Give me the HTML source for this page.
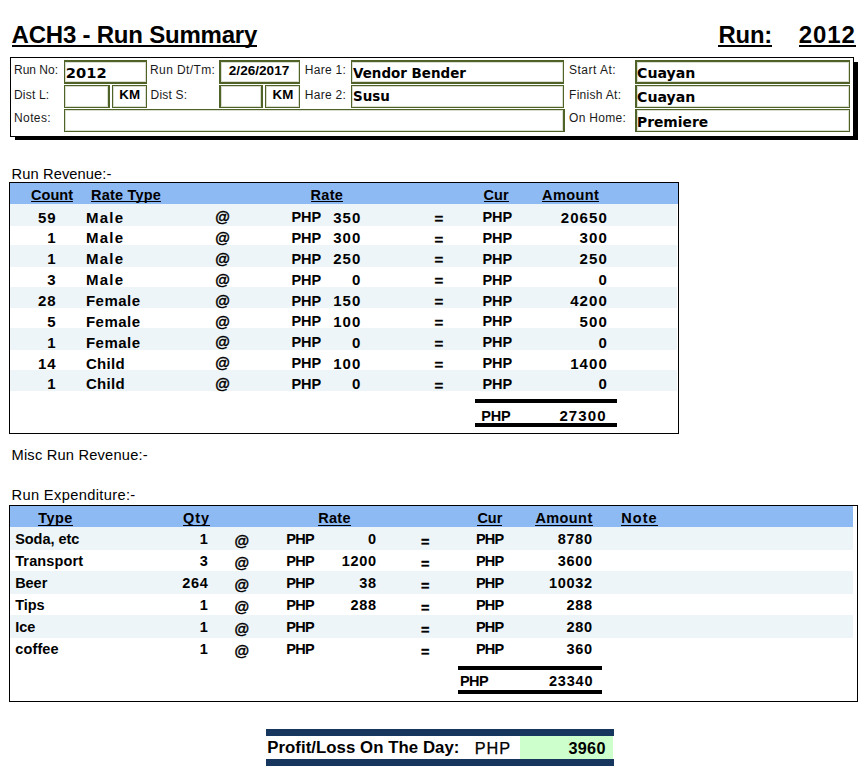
<!DOCTYPE html>
<html lang="en">
<head>
<meta charset="utf-8">
<title>ACH3 - Run Summary</title>
<style>
html,body{margin:0;padding:0;background:#fff}
body{width:864px;height:773px;position:relative;overflow:hidden;font-family:'Liberation Sans',sans-serif;color:#000}
.t{position:absolute;white-space:nowrap;font-family:'Liberation Sans',sans-serif;font-weight:400}
.b{font-weight:700}
.lab{color:#1a1a1a}
.r{position:absolute}
.fb{position:absolute;box-sizing:border-box;border:0 solid #4f6228;background:#fff;box-shadow:inset 0 0 0 1px rgba(79,98,40,.22)}
.shd{position:absolute;left:15px;top:62px;width:843px;height:78px;background:#000}
.hdr{position:absolute;left:10px;top:57px;width:844px;height:80px;box-sizing:border-box;border:1px solid #000;background:#fff}
</style>
</head>
<body>
<div class="t b" style="top:19.88px;font-size:24px;line-height:29px;height:25.12px;left:11.60px;letter-spacing:-0.22px;border-bottom:2px solid #000">ACH3 - Run Summary</div>
<div class="t b" style="top:19.95px;font-size:23.8px;line-height:29px;height:25.05px;left:718.40px;letter-spacing:-0.1px;border-bottom:2px solid #000">Run:</div>
<div class="t b" style="top:19.88px;font-size:24px;line-height:29px;height:25.12px;left:798.80px;letter-spacing:0.9px;border-bottom:2px solid #000">2012</div>
<div class="shd"></div>
<div class="hdr"></div>
<div class="fb" style="left:64px;top:60px;width:83px;height:24px;border-width:2px 1px 2px 1px"></div>
<div class="fb" style="left:219px;top:60px;width:81px;height:24px;border-width:2px 1px 2px 2px"></div>
<div class="fb" style="left:351px;top:60px;width:213px;height:24px;border-width:2px 1px 2px 1px"></div>
<div class="fb" style="left:635px;top:60px;width:215px;height:24px;border-width:2px 1px 2px 2px"></div>
<div class="fb" style="left:64px;top:85px;width:46px;height:23px;border-width:1px 2px 1px 1px"></div>
<div class="fb" style="left:112px;top:85px;width:35px;height:23px;border-width:1px 1px 1px 1px"></div>
<div class="fb" style="left:219px;top:85px;width:44px;height:23px;border-width:1px 2px 1px 2px"></div>
<div class="fb" style="left:265px;top:85px;width:35px;height:23px;border-width:1px 1px 1px 1px"></div>
<div class="fb" style="left:351px;top:85px;width:213px;height:23px;border-width:1px 1px 1px 1px"></div>
<div class="fb" style="left:635px;top:85px;width:215px;height:23px;border-width:1px 1px 1px 2px"></div>
<div class="fb" style="left:64px;top:109px;width:501px;height:23px;border-width:1px 2px 1px 1px"></div>
<div class="fb" style="left:635px;top:109px;width:215px;height:23px;border-width:1px 1px 1px 2px"></div>
<div class="t lab" style="top:63.34px;font-size:12px;line-height:14px;height:14px;left:14.00px">Run No:</div>
<div class="t lab" style="top:87.59px;font-size:12px;line-height:14px;height:14px;left:14.00px;letter-spacing:0.2px">Dist L:</div>
<div class="t lab" style="top:111.34px;font-size:12px;line-height:14px;height:14px;left:14.00px;letter-spacing:0.4px">Notes:</div>
<div class="t lab" style="top:63.34px;font-size:12px;line-height:14px;height:14px;left:150.00px;letter-spacing:0.4px">Run Dt/Tm:</div>
<div class="t lab" style="top:87.59px;font-size:12px;line-height:14px;height:14px;left:150.60px;letter-spacing:0.2px">Dist S:</div>
<div class="t lab" style="top:63.34px;font-size:12px;line-height:14px;height:14px;left:304.70px;letter-spacing:0.3px">Hare 1:</div>
<div class="t lab" style="top:87.59px;font-size:12px;line-height:14px;height:14px;left:304.70px;letter-spacing:0.3px">Hare 2:</div>
<div class="t lab" style="top:63.34px;font-size:12px;line-height:14px;height:14px;left:569.00px;letter-spacing:0.5px">Start At:</div>
<div class="t lab" style="top:87.59px;font-size:12px;line-height:14px;height:14px;left:569.00px;letter-spacing:0.3px">Finish At:</div>
<div class="t lab" style="top:111.34px;font-size:12px;line-height:14px;height:14px;left:569.00px;letter-spacing:0.3px">On Home:</div>
<div class="t b" style="top:63.82px;font-size:14.67px;line-height:18px;height:18px;left:65.80px;font-family:'DejaVu Sans', sans-serif;transform:scaleX(1.0);transform-origin:left center">2012</div>
<div class="t b" style="top:63.92px;font-size:14.67px;line-height:18px;height:18px;left:352.50px;font-family:'DejaVu Sans', sans-serif;transform:scaleX(0.918);transform-origin:left center">Vendor Bender</div>
<div class="t b" style="top:87.42px;font-size:14.67px;line-height:18px;height:18px;left:352.50px;font-family:'DejaVu Sans', sans-serif;transform:scaleX(0.918);transform-origin:left center">Susu</div>
<div class="t b" style="top:63.92px;font-size:14.67px;line-height:18px;height:18px;left:636.70px;font-family:'DejaVu Sans', sans-serif;transform:scaleX(0.965);transform-origin:left center">Cuayan</div>
<div class="t b" style="top:87.67px;font-size:14.67px;line-height:18px;height:18px;left:636.70px;font-family:'DejaVu Sans', sans-serif;transform:scaleX(0.965);transform-origin:left center">Cuayan</div>
<div class="t b" style="top:112.52px;font-size:14.67px;line-height:18px;height:18px;left:636.70px;font-family:'DejaVu Sans', sans-serif;transform:scaleX(0.945);transform-origin:left center">Premiere</div>
<div class="t b" style="top:63.04px;font-size:13.6px;line-height:16px;height:16px;left:228.80px">2/26/2017</div>
<div class="t b" style="top:86.88px;font-size:13.33px;line-height:16px;height:16px;left:119.30px">KM</div>
<div class="t b" style="top:86.88px;font-size:13.33px;line-height:16px;height:16px;left:272.50px">KM</div>
<div class="t" style="top:164.92px;font-size:14.67px;line-height:18px;height:18px;left:11.60px;letter-spacing:0.1px">Run Revenue:-</div>
<div class="t" style="top:445.92px;font-size:14.67px;line-height:18px;height:18px;left:11.50px;letter-spacing:0.2px">Misc Run Revenue:-</div>
<div class="t" style="top:485.92px;font-size:14.67px;line-height:18px;height:18px;left:11.50px;letter-spacing:0.35px">Run Expenditure:-</div>
<div class="r" style="left:9px;top:182px;width:670px;height:252px;box-sizing:border-box;border:1px solid #000"></div>
<div class="r" style="left:10px;top:183px;width:668px;height:21px;background:#8ebaf4"></div>
<div class="r" style="left:10px;top:204.0px;width:667px;height:21.6px;background:#edf5f9"></div>
<div class="r" style="left:10px;top:245.42px;width:667px;height:21.6px;background:#edf5f9"></div>
<div class="r" style="left:10px;top:286.84px;width:667px;height:21.6px;background:#edf5f9"></div>
<div class="r" style="left:10px;top:328.26px;width:667px;height:21.6px;background:#edf5f9"></div>
<div class="r" style="left:10px;top:369.68px;width:667px;height:21.6px;background:#edf5f9"></div>
<div class="t b" style="top:187.08px;font-size:14.5px;line-height:17px;height:13.92px;left:31.00px;letter-spacing:0.03px;border-bottom:1px solid #000">Count</div>
<div class="t b" style="top:187.08px;font-size:14.5px;line-height:17px;height:13.92px;left:91.00px;letter-spacing:0.2px;border-bottom:1px solid #000">Rate Type</div>
<div class="t b" style="top:187.08px;font-size:14.5px;line-height:17px;height:13.92px;left:310.60px;letter-spacing:0.27px;border-bottom:1px solid #000">Rate</div>
<div class="t b" style="top:187.08px;font-size:14.5px;line-height:17px;height:13.92px;left:483.60px;border-bottom:1px solid #000">Cur</div>
<div class="t b" style="top:187.08px;font-size:14.5px;line-height:17px;height:13.92px;left:542.00px;letter-spacing:0.41px;border-bottom:1px solid #000">Amount</div>
<div class="t b" style="top:208.50px;font-size:15px;line-height:18px;height:18px;right:807.20px;letter-spacing:1.1px">59</div>
<div class="t b" style="top:208.50px;font-size:15px;line-height:18px;height:18px;left:85.90px;letter-spacing:1.25px">Male</div>
<div class="t b" style="top:208.30px;font-size:15px;line-height:18px;height:18px;left:215.00px;font-style:italic;-webkit-text-stroke:0.35px #000">@</div>
<div class="t b" style="top:209.18px;font-size:14.5px;line-height:17px;height:17px;left:291.60px;letter-spacing:-0.15px">PHP</div>
<div class="t b" style="top:208.50px;font-size:15px;line-height:18px;height:18px;right:502.50px;letter-spacing:1.1px">350</div>
<div class="t b" style="top:209.70px;font-size:15px;line-height:18px;height:18px;left:434.60px;-webkit-text-stroke:0.3px #000">=</div>
<div class="t b" style="top:209.18px;font-size:14.5px;line-height:17px;height:17px;left:482.60px;letter-spacing:-0.15px">PHP</div>
<div class="t b" style="top:208.50px;font-size:15px;line-height:18px;height:18px;right:256.10px;letter-spacing:1.1px">20650</div>
<div class="t b" style="top:229.36px;font-size:15px;line-height:18px;height:18px;right:807.20px;letter-spacing:1.1px">1</div>
<div class="t b" style="top:229.36px;font-size:15px;line-height:18px;height:18px;left:85.90px;letter-spacing:1.25px">Male</div>
<div class="t b" style="top:229.16px;font-size:15px;line-height:18px;height:18px;left:215.00px;font-style:italic;-webkit-text-stroke:0.35px #000">@</div>
<div class="t b" style="top:230.04px;font-size:14.5px;line-height:17px;height:17px;left:291.60px;letter-spacing:-0.15px">PHP</div>
<div class="t b" style="top:229.36px;font-size:15px;line-height:18px;height:18px;right:502.50px;letter-spacing:1.1px">300</div>
<div class="t b" style="top:230.56px;font-size:15px;line-height:18px;height:18px;left:434.60px;-webkit-text-stroke:0.3px #000">=</div>
<div class="t b" style="top:230.04px;font-size:14.5px;line-height:17px;height:17px;left:482.60px;letter-spacing:-0.15px">PHP</div>
<div class="t b" style="top:229.36px;font-size:15px;line-height:18px;height:18px;right:256.10px;letter-spacing:1.1px">300</div>
<div class="t b" style="top:250.22px;font-size:15px;line-height:18px;height:18px;right:807.20px;letter-spacing:1.1px">1</div>
<div class="t b" style="top:250.22px;font-size:15px;line-height:18px;height:18px;left:85.90px;letter-spacing:1.25px">Male</div>
<div class="t b" style="top:250.02px;font-size:15px;line-height:18px;height:18px;left:215.00px;font-style:italic;-webkit-text-stroke:0.35px #000">@</div>
<div class="t b" style="top:250.90px;font-size:14.5px;line-height:17px;height:17px;left:291.60px;letter-spacing:-0.15px">PHP</div>
<div class="t b" style="top:250.22px;font-size:15px;line-height:18px;height:18px;right:502.50px;letter-spacing:1.1px">250</div>
<div class="t b" style="top:251.42px;font-size:15px;line-height:18px;height:18px;left:434.60px;-webkit-text-stroke:0.3px #000">=</div>
<div class="t b" style="top:250.90px;font-size:14.5px;line-height:17px;height:17px;left:482.60px;letter-spacing:-0.15px">PHP</div>
<div class="t b" style="top:250.22px;font-size:15px;line-height:18px;height:18px;right:256.10px;letter-spacing:1.1px">250</div>
<div class="t b" style="top:271.08px;font-size:15px;line-height:18px;height:18px;right:807.20px;letter-spacing:1.1px">3</div>
<div class="t b" style="top:271.08px;font-size:15px;line-height:18px;height:18px;left:85.90px;letter-spacing:1.25px">Male</div>
<div class="t b" style="top:270.88px;font-size:15px;line-height:18px;height:18px;left:215.00px;font-style:italic;-webkit-text-stroke:0.35px #000">@</div>
<div class="t b" style="top:271.76px;font-size:14.5px;line-height:17px;height:17px;left:291.60px;letter-spacing:-0.15px">PHP</div>
<div class="t b" style="top:271.08px;font-size:15px;line-height:18px;height:18px;right:502.50px;letter-spacing:1.1px">0</div>
<div class="t b" style="top:272.28px;font-size:15px;line-height:18px;height:18px;left:434.60px;-webkit-text-stroke:0.3px #000">=</div>
<div class="t b" style="top:271.76px;font-size:14.5px;line-height:17px;height:17px;left:482.60px;letter-spacing:-0.15px">PHP</div>
<div class="t b" style="top:271.08px;font-size:15px;line-height:18px;height:18px;right:256.10px;letter-spacing:1.1px">0</div>
<div class="t b" style="top:291.94px;font-size:15px;line-height:18px;height:18px;right:807.20px;letter-spacing:1.1px">28</div>
<div class="t b" style="top:291.94px;font-size:15px;line-height:18px;height:18px;left:85.90px;letter-spacing:0.5px">Female</div>
<div class="t b" style="top:291.74px;font-size:15px;line-height:18px;height:18px;left:215.00px;font-style:italic;-webkit-text-stroke:0.35px #000">@</div>
<div class="t b" style="top:292.62px;font-size:14.5px;line-height:17px;height:17px;left:291.60px;letter-spacing:-0.15px">PHP</div>
<div class="t b" style="top:291.94px;font-size:15px;line-height:18px;height:18px;right:502.50px;letter-spacing:1.1px">150</div>
<div class="t b" style="top:293.14px;font-size:15px;line-height:18px;height:18px;left:434.60px;-webkit-text-stroke:0.3px #000">=</div>
<div class="t b" style="top:292.62px;font-size:14.5px;line-height:17px;height:17px;left:482.60px;letter-spacing:-0.15px">PHP</div>
<div class="t b" style="top:291.94px;font-size:15px;line-height:18px;height:18px;right:256.10px;letter-spacing:1.1px">4200</div>
<div class="t b" style="top:312.80px;font-size:15px;line-height:18px;height:18px;right:807.20px;letter-spacing:1.1px">5</div>
<div class="t b" style="top:312.80px;font-size:15px;line-height:18px;height:18px;left:85.90px;letter-spacing:0.5px">Female</div>
<div class="t b" style="top:312.60px;font-size:15px;line-height:18px;height:18px;left:215.00px;font-style:italic;-webkit-text-stroke:0.35px #000">@</div>
<div class="t b" style="top:313.48px;font-size:14.5px;line-height:17px;height:17px;left:291.60px;letter-spacing:-0.15px">PHP</div>
<div class="t b" style="top:312.80px;font-size:15px;line-height:18px;height:18px;right:502.50px;letter-spacing:1.1px">100</div>
<div class="t b" style="top:314.00px;font-size:15px;line-height:18px;height:18px;left:434.60px;-webkit-text-stroke:0.3px #000">=</div>
<div class="t b" style="top:313.48px;font-size:14.5px;line-height:17px;height:17px;left:482.60px;letter-spacing:-0.15px">PHP</div>
<div class="t b" style="top:312.80px;font-size:15px;line-height:18px;height:18px;right:256.10px;letter-spacing:1.1px">500</div>
<div class="t b" style="top:333.66px;font-size:15px;line-height:18px;height:18px;right:807.20px;letter-spacing:1.1px">1</div>
<div class="t b" style="top:333.66px;font-size:15px;line-height:18px;height:18px;left:85.90px;letter-spacing:0.5px">Female</div>
<div class="t b" style="top:333.46px;font-size:15px;line-height:18px;height:18px;left:215.00px;font-style:italic;-webkit-text-stroke:0.35px #000">@</div>
<div class="t b" style="top:334.34px;font-size:14.5px;line-height:17px;height:17px;left:291.60px;letter-spacing:-0.15px">PHP</div>
<div class="t b" style="top:333.66px;font-size:15px;line-height:18px;height:18px;right:502.50px;letter-spacing:1.1px">0</div>
<div class="t b" style="top:334.86px;font-size:15px;line-height:18px;height:18px;left:434.60px;-webkit-text-stroke:0.3px #000">=</div>
<div class="t b" style="top:334.34px;font-size:14.5px;line-height:17px;height:17px;left:482.60px;letter-spacing:-0.15px">PHP</div>
<div class="t b" style="top:333.66px;font-size:15px;line-height:18px;height:18px;right:256.10px;letter-spacing:1.1px">0</div>
<div class="t b" style="top:354.52px;font-size:15px;line-height:18px;height:18px;right:807.20px;letter-spacing:1.1px">14</div>
<div class="t b" style="top:354.52px;font-size:15px;line-height:18px;height:18px;left:85.90px;letter-spacing:0.3px">Child</div>
<div class="t b" style="top:354.32px;font-size:15px;line-height:18px;height:18px;left:215.00px;font-style:italic;-webkit-text-stroke:0.35px #000">@</div>
<div class="t b" style="top:355.20px;font-size:14.5px;line-height:17px;height:17px;left:291.60px;letter-spacing:-0.15px">PHP</div>
<div class="t b" style="top:354.52px;font-size:15px;line-height:18px;height:18px;right:502.50px;letter-spacing:1.1px">100</div>
<div class="t b" style="top:355.72px;font-size:15px;line-height:18px;height:18px;left:434.60px;-webkit-text-stroke:0.3px #000">=</div>
<div class="t b" style="top:355.20px;font-size:14.5px;line-height:17px;height:17px;left:482.60px;letter-spacing:-0.15px">PHP</div>
<div class="t b" style="top:354.52px;font-size:15px;line-height:18px;height:18px;right:256.10px;letter-spacing:1.1px">1400</div>
<div class="t b" style="top:375.38px;font-size:15px;line-height:18px;height:18px;right:807.20px;letter-spacing:1.1px">1</div>
<div class="t b" style="top:375.38px;font-size:15px;line-height:18px;height:18px;left:85.90px;letter-spacing:0.3px">Child</div>
<div class="t b" style="top:375.18px;font-size:15px;line-height:18px;height:18px;left:215.00px;font-style:italic;-webkit-text-stroke:0.35px #000">@</div>
<div class="t b" style="top:376.06px;font-size:14.5px;line-height:17px;height:17px;left:291.60px;letter-spacing:-0.15px">PHP</div>
<div class="t b" style="top:375.38px;font-size:15px;line-height:18px;height:18px;right:502.50px;letter-spacing:1.1px">0</div>
<div class="t b" style="top:376.58px;font-size:15px;line-height:18px;height:18px;left:434.60px;-webkit-text-stroke:0.3px #000">=</div>
<div class="t b" style="top:376.06px;font-size:14.5px;line-height:17px;height:17px;left:482.60px;letter-spacing:-0.15px">PHP</div>
<div class="t b" style="top:375.38px;font-size:15px;line-height:18px;height:18px;right:256.10px;letter-spacing:1.1px">0</div>
<div class="r" style="left:475.3px;top:399px;width:141.7px;height:4px;background:#000"></div>
<div class="r" style="left:475.3px;top:423px;width:141.7px;height:4px;background:#000"></div>
<div class="t b" style="top:407.98px;font-size:14.5px;line-height:17px;height:17px;left:481.20px;letter-spacing:-0.15px">PHP</div>
<div class="t b" style="top:407.20px;font-size:15px;line-height:18px;height:18px;right:257.40px;letter-spacing:1.1px">27300</div>
<div class="r" style="left:9px;top:505px;width:849px;height:197px;box-sizing:border-box;border:1px solid #000"></div>
<div class="r" style="left:10px;top:506px;width:843px;height:20.8px;background:#8ebaf4"></div>
<div class="r" style="left:10px;top:526.8px;width:843px;height:22.9px;background:#edf5f9"></div>
<div class="r" style="left:10px;top:570.8px;width:843px;height:22.9px;background:#edf5f9"></div>
<div class="r" style="left:10px;top:614.8px;width:843px;height:22.9px;background:#edf5f9"></div>
<div class="t b" style="top:509.98px;font-size:14.5px;line-height:17px;height:14.72px;left:38.20px;letter-spacing:0.46px;border-bottom:1px solid #000">Type</div>
<div class="t b" style="top:509.98px;font-size:14.5px;line-height:17px;height:14.72px;left:182.90px;letter-spacing:1.0px;border-bottom:1px solid #000">Qty</div>
<div class="t b" style="top:509.98px;font-size:14.5px;line-height:17px;height:14.72px;left:318.30px;letter-spacing:0.27px;border-bottom:1px solid #000">Rate</div>
<div class="t b" style="top:509.98px;font-size:14.5px;line-height:17px;height:14.72px;left:477.40px;border-bottom:1px solid #000">Cur</div>
<div class="t b" style="top:509.98px;font-size:14.5px;line-height:17px;height:14.72px;left:535.40px;letter-spacing:0.41px;border-bottom:1px solid #000">Amount</div>
<div class="t b" style="top:509.98px;font-size:14.5px;line-height:17px;height:14.72px;left:621.30px;letter-spacing:1.0px;border-bottom:1px solid #000">Note</div>
<div class="t b" style="top:531.28px;font-size:14.5px;line-height:17px;height:17px;left:15.20px;letter-spacing:-0.05px">Soda, etc</div>
<div class="t b" style="top:531.28px;font-size:14.5px;line-height:17px;height:17px;right:655.50px;letter-spacing:0.7px">1</div>
<div class="t b" style="top:532.40px;font-size:15px;line-height:18px;height:18px;left:234.20px;font-style:italic;-webkit-text-stroke:0.35px #000">@</div>
<div class="t b" style="top:531.28px;font-size:14.5px;line-height:17px;height:17px;left:286.30px;letter-spacing:-0.75px">PHP</div>
<div class="t b" style="top:531.28px;font-size:14.5px;line-height:17px;height:17px;right:487.30px;letter-spacing:0.7px">0</div>
<div class="t b" style="top:533.58px;font-size:14.5px;line-height:17px;height:17px;left:421.00px;-webkit-text-stroke:0.3px #000">=</div>
<div class="t b" style="top:531.28px;font-size:14.5px;line-height:17px;height:17px;left:475.90px;letter-spacing:-0.75px">PHP</div>
<div class="t b" style="top:531.28px;font-size:14.5px;line-height:17px;height:17px;right:271.30px;letter-spacing:0.7px">8780</div>
<div class="t b" style="top:553.28px;font-size:14.5px;line-height:17px;height:17px;left:15.20px;letter-spacing:0.12px">Transport</div>
<div class="t b" style="top:553.28px;font-size:14.5px;line-height:17px;height:17px;right:655.50px;letter-spacing:0.7px">3</div>
<div class="t b" style="top:554.40px;font-size:15px;line-height:18px;height:18px;left:234.20px;font-style:italic;-webkit-text-stroke:0.35px #000">@</div>
<div class="t b" style="top:553.28px;font-size:14.5px;line-height:17px;height:17px;left:286.30px;letter-spacing:-0.75px">PHP</div>
<div class="t b" style="top:553.28px;font-size:14.5px;line-height:17px;height:17px;right:487.30px;letter-spacing:0.7px">1200</div>
<div class="t b" style="top:555.58px;font-size:14.5px;line-height:17px;height:17px;left:421.00px;-webkit-text-stroke:0.3px #000">=</div>
<div class="t b" style="top:553.28px;font-size:14.5px;line-height:17px;height:17px;left:475.90px;letter-spacing:-0.75px">PHP</div>
<div class="t b" style="top:553.28px;font-size:14.5px;line-height:17px;height:17px;right:271.30px;letter-spacing:0.7px">3600</div>
<div class="t b" style="top:575.28px;font-size:14.5px;line-height:17px;height:17px;left:15.20px;letter-spacing:-0.05px">Beer</div>
<div class="t b" style="top:575.28px;font-size:14.5px;line-height:17px;height:17px;right:655.50px;letter-spacing:0.7px">264</div>
<div class="t b" style="top:576.40px;font-size:15px;line-height:18px;height:18px;left:234.20px;font-style:italic;-webkit-text-stroke:0.35px #000">@</div>
<div class="t b" style="top:575.28px;font-size:14.5px;line-height:17px;height:17px;left:286.30px;letter-spacing:-0.75px">PHP</div>
<div class="t b" style="top:575.28px;font-size:14.5px;line-height:17px;height:17px;right:487.30px;letter-spacing:0.7px">38</div>
<div class="t b" style="top:577.58px;font-size:14.5px;line-height:17px;height:17px;left:421.00px;-webkit-text-stroke:0.3px #000">=</div>
<div class="t b" style="top:575.28px;font-size:14.5px;line-height:17px;height:17px;left:475.90px;letter-spacing:-0.75px">PHP</div>
<div class="t b" style="top:575.28px;font-size:14.5px;line-height:17px;height:17px;right:271.30px;letter-spacing:0.7px">10032</div>
<div class="t b" style="top:597.28px;font-size:14.5px;line-height:17px;height:17px;left:15.20px;letter-spacing:-0.05px">Tips</div>
<div class="t b" style="top:597.28px;font-size:14.5px;line-height:17px;height:17px;right:655.50px;letter-spacing:0.7px">1</div>
<div class="t b" style="top:598.40px;font-size:15px;line-height:18px;height:18px;left:234.20px;font-style:italic;-webkit-text-stroke:0.35px #000">@</div>
<div class="t b" style="top:597.28px;font-size:14.5px;line-height:17px;height:17px;left:286.30px;letter-spacing:-0.75px">PHP</div>
<div class="t b" style="top:597.28px;font-size:14.5px;line-height:17px;height:17px;right:487.30px;letter-spacing:0.7px">288</div>
<div class="t b" style="top:599.58px;font-size:14.5px;line-height:17px;height:17px;left:421.00px;-webkit-text-stroke:0.3px #000">=</div>
<div class="t b" style="top:597.28px;font-size:14.5px;line-height:17px;height:17px;left:475.90px;letter-spacing:-0.75px">PHP</div>
<div class="t b" style="top:597.28px;font-size:14.5px;line-height:17px;height:17px;right:271.30px;letter-spacing:0.7px">288</div>
<div class="t b" style="top:619.28px;font-size:14.5px;line-height:17px;height:17px;left:15.20px;letter-spacing:-0.05px">Ice</div>
<div class="t b" style="top:619.28px;font-size:14.5px;line-height:17px;height:17px;right:655.50px;letter-spacing:0.7px">1</div>
<div class="t b" style="top:620.40px;font-size:15px;line-height:18px;height:18px;left:234.20px;font-style:italic;-webkit-text-stroke:0.35px #000">@</div>
<div class="t b" style="top:619.28px;font-size:14.5px;line-height:17px;height:17px;left:286.30px;letter-spacing:-0.75px">PHP</div>
<div class="t b" style="top:621.58px;font-size:14.5px;line-height:17px;height:17px;left:421.00px;-webkit-text-stroke:0.3px #000">=</div>
<div class="t b" style="top:619.28px;font-size:14.5px;line-height:17px;height:17px;left:475.90px;letter-spacing:-0.75px">PHP</div>
<div class="t b" style="top:619.28px;font-size:14.5px;line-height:17px;height:17px;right:271.30px;letter-spacing:0.7px">280</div>
<div class="t b" style="top:641.28px;font-size:14.5px;line-height:17px;height:17px;left:15.20px;letter-spacing:0.15px">coffee</div>
<div class="t b" style="top:641.28px;font-size:14.5px;line-height:17px;height:17px;right:655.50px;letter-spacing:0.7px">1</div>
<div class="t b" style="top:642.40px;font-size:15px;line-height:18px;height:18px;left:234.20px;font-style:italic;-webkit-text-stroke:0.35px #000">@</div>
<div class="t b" style="top:641.28px;font-size:14.5px;line-height:17px;height:17px;left:286.30px;letter-spacing:-0.75px">PHP</div>
<div class="t b" style="top:643.58px;font-size:14.5px;line-height:17px;height:17px;left:421.00px;-webkit-text-stroke:0.3px #000">=</div>
<div class="t b" style="top:641.28px;font-size:14.5px;line-height:17px;height:17px;left:475.90px;letter-spacing:-0.75px">PHP</div>
<div class="t b" style="top:641.28px;font-size:14.5px;line-height:17px;height:17px;right:271.30px;letter-spacing:0.7px">360</div>
<div class="r" style="left:458px;top:666px;width:144px;height:4px;background:#000"></div>
<div class="r" style="left:458px;top:690px;width:144px;height:4px;background:#000"></div>
<div class="t b" style="top:673.48px;font-size:14.5px;line-height:17px;height:17px;left:460.00px;letter-spacing:-0.6px">PHP</div>
<div class="t b" style="top:673.48px;font-size:14.5px;line-height:17px;height:17px;right:270.70px;letter-spacing:0.8px">23340</div>
<div class="r" style="left:266px;top:729px;width:348px;height:7px;background:#17365d"></div>
<div class="r" style="left:266px;top:759px;width:348px;height:7px;background:#17365d"></div>
<div class="r" style="left:520px;top:736px;width:93px;height:23px;background:#ccffcc"></div>
<div class="t b" style="top:737.98px;font-size:16.8px;line-height:20px;height:20px;left:267.20px;letter-spacing:0.05px">Profit/Loss On The Day:</div>
<div class="t" style="top:738.15px;font-size:16.3px;line-height:20px;height:20px;left:474.80px;letter-spacing:0.9px;-webkit-text-stroke:0.25px #000">PHP</div>
<div class="t b" style="top:738.69px;font-size:16.2px;line-height:19px;height:19px;right:258.30px;letter-spacing:0.3px">3960</div>
</body>
</html>
